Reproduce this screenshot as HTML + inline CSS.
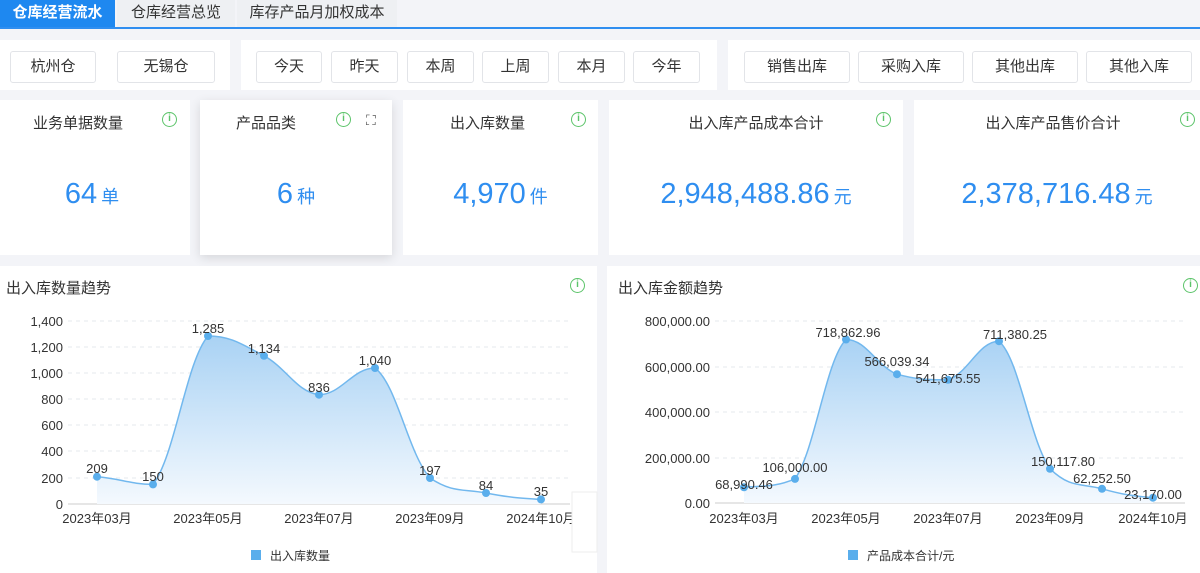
<!DOCTYPE html>
<html><head><meta charset="utf-8"><style>
*{box-sizing:border-box;margin:0;padding:0}
body{width:1200px;height:573px;overflow:hidden;background:#f3f4f8;font-family:"Liberation Sans","Noto Sans CJK SC",sans-serif;color:#333;position:relative}
.a{position:absolute}
.tab{position:absolute;top:0;height:27px;line-height:25px;font-size:15px;text-align:center;background:#eef0f3;color:#333}
.panel{position:absolute;background:#fff}
.btn{position:absolute;top:11px;height:32px;border:1px solid #e2e4e8;border-radius:3px;font-size:15px;line-height:30px;text-align:center;color:#333;background:#fff}
.card{position:absolute;top:100px;height:155px;background:#fff}
.ct{position:absolute;top:12px;width:100%;text-align:center;font-size:15px;color:#333}
.cv{position:absolute;top:78px;width:100%;text-align:center;font-size:29px;color:#2f8ef0}
.cv small{font-size:18px;margin-left:4px}
.info{position:absolute;width:15px;height:15px;border:1.5px solid #5cc46a;border-radius:50%;color:#5cc46a;font-size:10px;line-height:12px;text-align:center;font-weight:bold}
svg text{font-family:"Liberation Sans","Noto Sans CJK SC",sans-serif}
</style></head><body>
<div class="tab" style="left:0;width:115px;background:#1e88f0;color:#fff;font-weight:bold">仓库经营流水</div>
<div class="tab" style="left:117px;width:118px">仓库经营总览</div>
<div class="tab" style="left:237px;width:160px">库存产品月加权成本</div>
<div class="a" style="left:0;top:27px;width:1200px;height:2px;background:#2f8ef0"></div>

<div class="panel" style="left:0;top:40px;width:230px;height:50px">
<div class="btn" style="left:10px;width:86px">杭州仓</div>
<div class="btn" style="left:102px;width:86px;left:117px;width:98px">无锡仓</div></div>
<div class="panel" style="left:241px;top:40px;width:476px;height:50px">
<div class="btn" style="left:15px;width:66px">今天</div>
<div class="btn" style="left:90px;width:67px">昨天</div>
<div class="btn" style="left:166px;width:67px">本周</div>
<div class="btn" style="left:241px;width:67px">上周</div>
<div class="btn" style="left:317px;width:67px">本月</div>
<div class="btn" style="left:392px;width:67px">今年</div></div>
<div class="panel" style="left:728px;top:40px;width:472px;height:50px">
<div class="btn" style="left:16px;width:106px">销售出库</div>
<div class="btn" style="left:130px;width:106px">采购入库</div>
<div class="btn" style="left:244px;width:106px">其他出库</div>
<div class="btn" style="left:358px;width:106px">其他入库</div></div>

<div class="card" style="left:0;width:190px"><div class="ct" style="left:-17px">业务单据数量</div><div class="info" style="left:162px;top:12px">i</div><div class="cv" style="left:-3px">64<small>单</small></div></div>
<div class="card" style="left:200px;width:192px;box-shadow:0 3px 10px rgba(0,0,0,.12)"><div class="ct" style="left:-30px">产品品类</div><div class="info" style="left:136px;top:12px">i</div><div class="a" style="left:166px;top:12px;font-size:14px;color:#555">⛶</div><div class="cv">6<small>种</small></div></div>
<div class="card" style="left:403px;width:195px"><div class="ct" style="left:-13px">出入库数量</div><div class="info" style="left:168px;top:12px">i</div><div class="cv">4,970<small>件</small></div></div>
<div class="card" style="left:609px;width:294px"><div class="ct" style="left:0">出入库产品成本合计</div><div class="info" style="left:267px;top:12px">i</div><div class="cv">2,948,488.86<small>元</small></div></div>
<div class="card" style="left:914px;width:286px"><div class="ct" style="left:-4px">出入库产品售价合计</div><div class="info" style="left:266px;top:12px">i</div><div class="cv">2,378,716.48<small>元</small></div></div>

<div class="panel" style="left:0;top:266px;width:597px;height:307px"></div>
<div class="panel" style="left:607px;top:266px;width:593px;height:307px"></div>
<div class="a" style="left:6px;top:277px;font-size:15px">出入库数量趋势</div>
<div class="info" style="left:570px;top:278px">i</div>
<div class="a" style="left:618px;top:277px;font-size:15px">出入库金额趋势</div>
<div class="info" style="left:1183px;top:278px">i</div>

<svg class="a" style="left:0;top:0" width="1200" height="573">
<defs><linearGradient id="g" x1="0" y1="0" x2="0" y2="1"><stop offset="0" stop-color="#a9d2f4"/><stop offset="1" stop-color="#f4f9fe"/></linearGradient></defs>
<g stroke="#e6e8ec" stroke-dasharray="4 4">
<line x1="68" x2="570" y1="321" y2="321"/><line x1="68" x2="570" y1="347" y2="347"/><line x1="68" x2="570" y1="373" y2="373"/><line x1="68" x2="570" y1="399" y2="399"/><line x1="68" x2="570" y1="425" y2="425"/><line x1="68" x2="570" y1="451" y2="451"/><line x1="68" x2="570" y1="478" y2="478"/>
<line x1="715" x2="1185" y1="321" y2="321"/><line x1="715" x2="1185" y1="367" y2="367"/><line x1="715" x2="1185" y1="412" y2="412"/><line x1="715" x2="1185" y1="458" y2="458"/>
</g>
<line x1="68" x2="570" y1="504" y2="504" stroke="#ccc"/>
<line x1="715" x2="1185" y1="503" y2="503" stroke="#ccc"/>
<path id="a1" fill="url(#g)"/><path id="l1" fill="none" stroke="#72b8ee" stroke-width="1.5"/>
<path id="a2" fill="url(#g)"/><path id="l2" fill="none" stroke="#72b8ee" stroke-width="1.5"/>
<g id="d" fill="#5aaeec"></g>
<g font-size="13" fill="#333" text-anchor="end">
<text x="63" y="326">1,400</text><text x="63" y="352">1,200</text><text x="63" y="378">1,000</text><text x="63" y="404">800</text><text x="63" y="430">600</text><text x="63" y="456">400</text><text x="63" y="483">200</text><text x="63" y="509">0</text>
<text x="710" y="326">800,000.00</text><text x="710" y="372">600,000.00</text><text x="710" y="417">400,000.00</text><text x="710" y="463">200,000.00</text><text x="710" y="508">0.00</text>
</g>
<g font-size="13" fill="#333" text-anchor="middle">
<text x="97" y="523">2023年03月</text><text x="208" y="523">2023年05月</text><text x="319" y="523">2023年07月</text><text x="430" y="523">2023年09月</text><text x="541" y="523">2024年10月</text>
<text x="744" y="523">2023年03月</text><text x="846" y="523">2023年05月</text><text x="948" y="523">2023年07月</text><text x="1050" y="523">2023年09月</text><text x="1153" y="523">2024年10月</text>
<text x="97" y="473">209</text><text x="153" y="481">150</text><text x="208" y="333">1,285</text><text x="264" y="353">1,134</text><text x="319" y="392">836</text><text x="375" y="365">1,040</text><text x="430" y="475">197</text><text x="486" y="490">84</text><text x="541" y="496">35</text>
<text x="744" y="489">68,990.46</text><text x="795" y="472">106,000.00</text><text x="848" y="337">718,862.96</text><text x="897" y="366">566,039.34</text><text x="948" y="383">541,675.55</text><text x="1015" y="339">711,380.25</text><text x="1063" y="466">150,117.80</text><text x="1102" y="483">62,252.50</text><text x="1153" y="499">23,170.00</text>
</g>
<rect x="251" y="550" width="10" height="10" fill="#5aaeec"/><text x="270" y="560" font-size="12" fill="#333">出入库数量</text>
<rect x="848" y="550" width="10" height="10" fill="#5aaeec"/><text x="867" y="560" font-size="12" fill="#333">产品成本合计/元</text>
<rect x="572" y="492" width="25" height="60" fill="#fff" stroke="#eee"/>
</svg>
<script>
function cl(v,a,b){var lo=Math.min(a,b),hi=Math.max(a,b);return Math.max(lo,Math.min(hi,v));}
function build(xs,ys,base,l,a){
 var d="M"+xs[0]+" "+ys[0];
 for(var i=0;i<xs.length-1;i++){
  var p0=i?i-1:i,p3=i+2<xs.length?i+2:i+1;
  var c1x=xs[i]+(xs[i+1]-xs[i])/2.5,c1y=cl(ys[i]+(ys[i+1]-ys[p0])/5,ys[i],ys[i+1]);
  var c2x=xs[i+1]-(xs[i+1]-xs[i])/2.5,c2y=cl(ys[i+1]-(ys[p3]-ys[i])/5,ys[i],ys[i+1]);
  d+=" C"+c1x+" "+c1y+" "+c2x+" "+c2y+" "+xs[i+1]+" "+ys[i+1];
 }
 document.getElementById(l).setAttribute("d",d);
 document.getElementById(a).setAttribute("d",d+" L"+xs[xs.length-1]+" "+base+" L"+xs[0]+" "+base+"Z");
 var g=document.getElementById("d");
 for(var i=0;i<xs.length;i++){var c=document.createElementNS("http://www.w3.org/2000/svg","circle");c.setAttribute("cx",xs[i]);c.setAttribute("cy",ys[i]);c.setAttribute("r",4);g.appendChild(c);}
}
build([97,153,208,264,319,375,430,486,541],[476.7,484.4,336,355.8,394.7,368,478,493,499.4],504,"l1","a1");
build([744,795,846,897,948,999,1050,1102,1153],[487.3,478.9,339.5,374.2,379.8,341.2,468.8,488.8,497.7],503,"l2","a2");
</script>
</body></html>
